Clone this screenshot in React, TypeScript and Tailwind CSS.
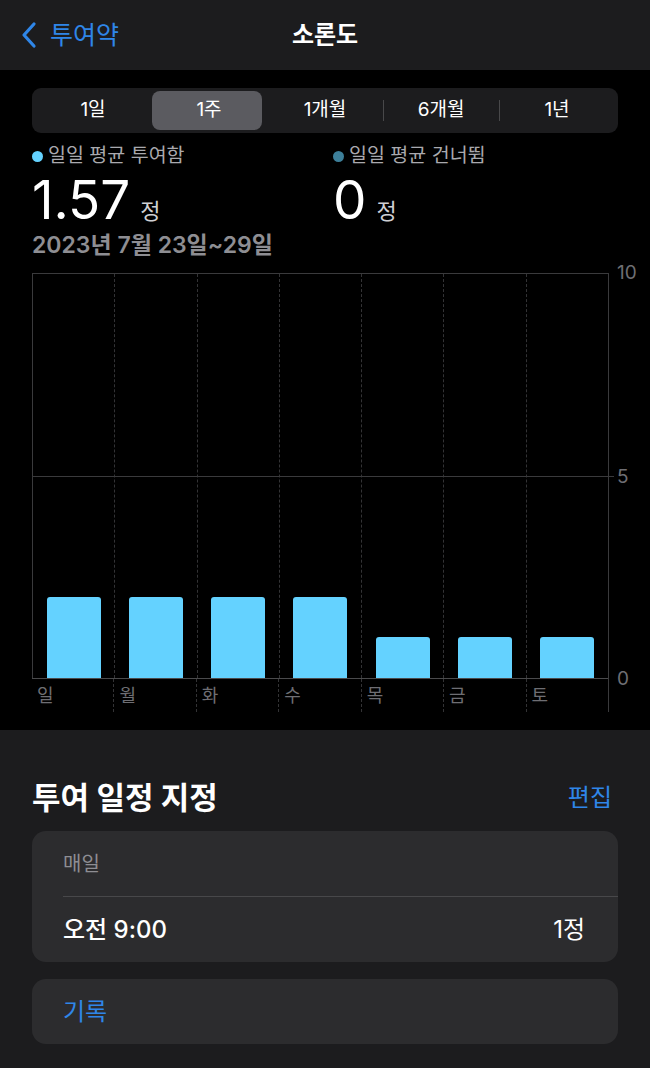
const font = "font-['Inter','Noto_Sans_CJK_KR',sans-serif]";

const days = [
  { label: "일", value: 2 },
  { label: "월", value: 2 },
  { label: "화", value: 2 },
  { label: "수", value: 2 },
  { label: "목", value: 1 },
  { label: "금", value: 1 },
  { label: "토", value: 1 },
];

const segments = ["1일", "1주", "1개월", "6개월", "1년"];

function Header() {
  return (
    <div className="relative flex h-[70px] items-center bg-[#1c1c1e] px-[20px]">
      <div className="flex items-center gap-[12px] text-[#2f86e8]">
        <svg width="18" height="28" viewBox="0 0 18 28" fill="none">
          <path d="M14 3 L4 14 L14 25" stroke="currentColor" strokeWidth="3.2" strokeLinecap="round" strokeLinejoin="round" />
        </svg>
        <span className="text-[25px] leading-none">투여약</span>
      </div>
      <div className="absolute left-1/2 -translate-x-1/2 text-[24px] font-semibold text-white">소론도</div>
    </div>
  );
}

function Segmented() {
  return (
    <div className="flex h-[45px] rounded-[9px] bg-[#1c1c1e] p-[3px]">
      {segments.map((s, i) => (
        <div key={s} className="relative flex flex-1 items-center justify-center">
          {i === 1 && <div className="absolute inset-y-0 left-[1px] right-[5px] rounded-[8px] bg-[#5b5b60]" />}
          {i >= 3 && <div className="absolute left-0 top-[9px] h-[21px] w-px bg-[#48484a]" />}
          <span className="relative text-[19px] text-white">{s}</span>
        </div>
      ))}
    </div>
  );
}

function Stats() {
  return (
    <div>
      <div className="mt-[12px] flex h-[22px] items-center">
        <div className="flex w-[301px] items-center gap-[5px]">
          <span className="h-[11px] w-[11px] rounded-full bg-[#64d2ff]" />
          <span className="text-[19.5px] text-[#a9a9ae]">일일 평균 투여함</span>
        </div>
        <div className="flex items-center gap-[5px]">
          <span className="h-[11px] w-[11px] rounded-full bg-[#3d7f99]" />
          <span className="text-[19.5px] text-[#a9a9ae]">일일 평균 건너뜀</span>
        </div>
      </div>
      <div className="mt-[4px] flex h-[58px] items-baseline">
        <div className="flex w-[301px] items-baseline gap-[10px]">
          <span className="text-[53px] leading-[58px] text-white">1.57</span>
          <span className="text-[22px] text-[#d0d0d4]">정</span>
        </div>
        <div className="flex items-baseline gap-[10px]">
          <span className="text-[53px] leading-[58px] text-white">0</span>
          <span className="text-[22px] text-[#d0d0d4]">정</span>
        </div>
      </div>
      <div className="mt-[2px] flex h-[28px] items-center text-[23px] font-semibold text-[#8e8e93]">2023년 7월 23일~29일</div>
    </div>
  );
}

function Chart() {
  return (
    <div className="mt-[14px] flex">
      <div className="relative w-[577px] border-r border-[#3a3a3c]">
        <div className="absolute left-0 right-[-6px] top-[203px] h-px bg-[#3a3a3c]" />
        <div className="flex h-[406px] border-y border-[#3a3a3c] border-b-[#4a4a4c]">
          {days.map((d, i) => (
            <div
              key={d.label}
              className={
                i === 0
                  ? "flex flex-1 items-end justify-center border-l border-[#3a3a3c]"
                  : "flex flex-1 items-end justify-center border-l border-dashed border-[#333335]"
              }
            >
              <div className="w-[54px] rounded-t-[3px] bg-[#64d2ff]" style={{ height: d.value * 40.6 }} />
            </div>
          ))}
        </div>
        <div className="flex h-[33px]">
          {days.map((d, i) => (
            <div
              key={d.label}
              className={
                i === 0
                  ? "flex flex-1 items-center pl-[5px] text-[18px] text-[#6e6e73]"
                  : "flex flex-1 items-center border-l border-dashed border-[#333335] pl-[5px] text-[18px] text-[#6e6e73]"
              }
            >
              {d.label}
            </div>
          ))}
        </div>
      </div>
      <div className="relative w-[41px] text-[19px] text-[#6e6e73]">
        <span className="absolute left-[8px] top-[-12px] leading-[24px]">10</span>
        <span className="absolute left-[8px] top-[192px] leading-[24px]">5</span>
        <span className="absolute left-[8px] top-[394px] leading-[24px]">0</span>
      </div>
    </div>
  );
}

function Schedule() {
  return (
    <div className="flex-1 bg-[#1c1c1e] px-[32px] pt-[50px]">
      <div className="flex h-[36px] items-center justify-between pr-[6px]">
        <span className="text-[31px] font-bold text-white">투여 일정 지정</span>
        <span className="text-[24px] text-[#2f86e8]">편집</span>
      </div>
      <div className="mt-[15px] rounded-[14px] bg-[#2c2c2e]">
        <div className="flex h-[65px] items-center px-[31px] text-[20px] text-[#8e8e93]">매일</div>
        <div className="ml-[31px] h-px bg-[#48484a]" />
        <div className="flex h-[65px] items-center justify-between pl-[31px] pr-[33px] text-[24px] text-white">
          <span className="font-medium">오전 9:00</span>
          <span>1정</span>
        </div>
      </div>
      <div className="mt-[17px] flex h-[65px] items-center rounded-[14px] bg-[#2c2c2e] px-[31px] text-[24px] text-[#2f86e8]">
        기록
      </div>
    </div>
  );
}

export default function App() {
  return (
    <div className={`${font} flex h-[1068px] w-[650px] flex-col overflow-hidden bg-black`}>
      <Header />
      <div className="pb-[18px] pl-[32px] pt-[18px]">
        <div className="pr-[32px]">
          <Segmented />
          <Stats />
        </div>
        <Chart />
      </div>
      <Schedule />
    </div>
  );
}
